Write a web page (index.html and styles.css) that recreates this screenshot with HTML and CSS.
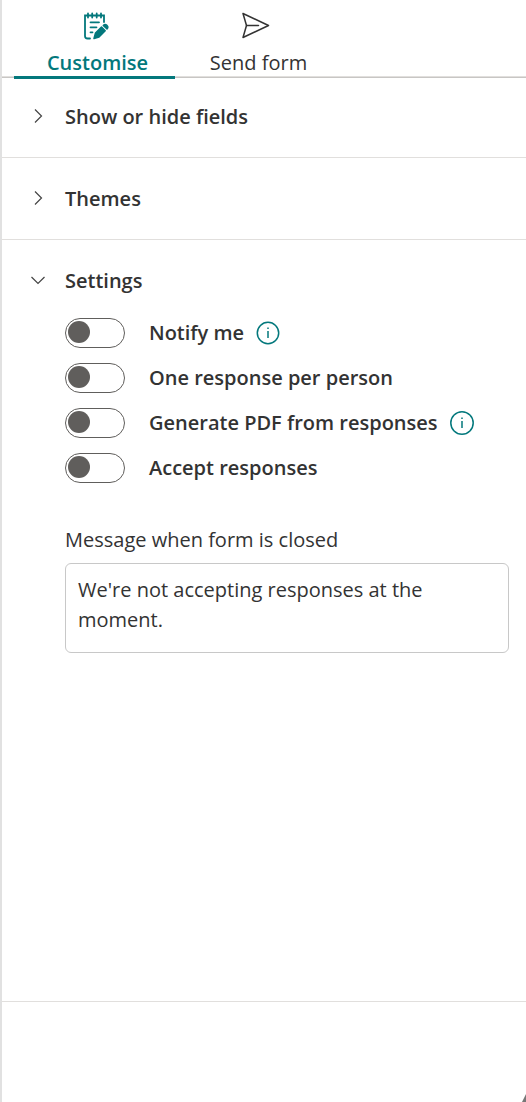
FILE: index.html
```html
<!DOCTYPE html>
<html lang="en-GB">
<head>
    <meta charset="UTF-8">
    <meta name="viewport" content="width=device-width, initial-scale=1.0">
    <title>Form settings</title>
    <link rel="stylesheet" href="styles.css">
</head>
<body>
    <div class="panel">
        <nav class="tabs">
            <button type="button" class="tab active">
                <svg class="tab-icon" viewBox="0 0 30 30" fill="none" stroke="currentColor" stroke-width="1.8" stroke-linecap="round">
                    <path d="M10 27.500H7.500A2.500 2.500 0 0 1 5 25V4.500H24V11"/>
                    <path d="M8 2.500V6.500M12.200 2.500V6.500M16.700 2.500V6.500M21 2.500V6.500"/>
                    <path d="M10.500 11.300H19M10.500 16.300H16.500M10.500 21.300H12.500"/>
                    <path d="M14 27.500L15.500 22L21.500 16L25.200 19.700L19 26Z" fill="currentColor" stroke-width="1.5" stroke-linejoin="round"/>
                    <path d="M23.300 14.500A2.500 2.500 0 0 1 27 18Z" fill="currentColor" stroke-width="1.5" stroke-linejoin="round"/>
                </svg>
                <span>Customise</span>
            </button>
            <button type="button" class="tab">
                <svg class="tab-icon" viewBox="0 0 30 30" fill="none" stroke="currentColor" stroke-width="1.500" stroke-linejoin="round">
                    <path d="M2 2.500L27.500 14.500L2 26.500L5.500 14.500Z"/>
                    <path d="M5.500 14.500H17.500" stroke-linecap="round"/>
                </svg>
                <span>Send form</span>
            </button>
        </nav>

        <main class="content">
            <section class="section">
                <button type="button" class="section-header" aria-expanded="false">
                    <svg class="chevron" viewBox="0 0 16 16"><path d="M5 .5L11.500 7L5 13.500"/></svg>
                    <span>Show or hide fields</span>
                </button>
            </section>

            <section class="section">
                <button type="button" class="section-header" aria-expanded="false">
                    <svg class="chevron" viewBox="0 0 16 16"><path d="M5 .5L11.500 7L5 13.500"/></svg>
                    <span>Themes</span>
                </button>
            </section>

            <section class="section">
                <button type="button" class="section-header" aria-expanded="true">
                    <svg class="chevron" viewBox="0 0 16 16"><path d="M1.500 4L8 10.500L14.500 4"/></svg>
                    <span>Settings</span>
                </button>

                <div class="settings">
                    <div class="setting">
                        <input type="checkbox" role="switch" class="toggle" id="notify">
                        <label for="notify">Notify me</label>
                        <button type="button" class="info" aria-label="About notifications">
                            <svg viewBox="0 0 24 24"><circle cx="12" cy="12" r="10.700"/><path d="M12 10V17M12 6.500V8"/></svg>
                        </button>
                    </div>
                    <div class="setting">
                        <input type="checkbox" role="switch" class="toggle" id="one-response">
                        <label for="one-response">One response per person</label>
                    </div>
                    <div class="setting">
                        <input type="checkbox" role="switch" class="toggle" id="pdf">
                        <label for="pdf">Generate PDF from responses</label>
                        <button type="button" class="info" aria-label="About PDF responses">
                            <svg viewBox="0 0 24 24"><circle cx="12" cy="12" r="11.200"/><path d="M12 10V17M12 6.500V8"/></svg>
                        </button>
                    </div>
                    <div class="setting">
                        <input type="checkbox" role="switch" class="toggle" id="accept">
                        <label for="accept">Accept responses</label>
                    </div>

                    <label class="message-label" for="message">Message when form is closed</label>
                    <textarea class="message" id="message" rows="2">We're not accepting responses at the moment.</textarea>
                </div>
            </section>
        </main>

        <footer class="footer">
            <svg class="corner" viewBox="0 0 4 8"><path d="M4 0V8H0Z"/></svg>
        </footer>
    </div>
</body>
</html>
```

FILE: styles.css
```css
* {
    box-sizing: border-box;
    margin: 0;
    padding: 0;
}
body {
    background-color: #fff;
    color: #333;
    font-family: "Open Sans", "Noto Sans", sans-serif;
    font-size: 20px;
    line-height: 30px;
}
button {
    background: none;
    border: none;
    color: inherit;
    font: inherit;
    cursor: pointer;
}
.panel {
    display: flex;
    flex-direction: column;
    min-height: 100vh;
    border-left: 2px solid #e1e1e1;
}
.tabs {
    display: flex;
    height: 78px;
    margin-bottom: -2px;
    padding-left: 12px;
    box-shadow: inset 0 -1px #c8c6c4, inset 0 -2px #e1dfdd;
}
.tab {
    display: flex;
    flex-direction: column;
    align-items: center;
    gap: 7px;
    width: 161px;
    height: 79px;
    padding-top: 11px;
    border-bottom: 3px solid transparent;
}
.tab span {
    padding-left: 6px;
}
.tab.active {
    color: #03787c;
    font-weight: 600;
    border-bottom-color: #03787c;
}
.tab-icon {
    flex: none;
    width: 30px;
    height: 30px;
}
.content {
    flex: 1;
}
.section {
    border-bottom: 1px solid #e1dfdd;
}
.section:last-child {
    border-bottom: none;
}
.section-header {
    display: flex;
    align-items: center;
    gap: 19px;
    width: 100%;
    height: 81px;
    padding-left: 28px;
    font-weight: 600;
    text-align: left;
}
.chevron {
    width: 16px;
    height: 16px;
    fill: none;
    stroke: #444;
    stroke-width: 1.2;
}
.settings {
    margin-top: -3px;
    padding: 0 17px 0 63px;
}
.setting {
    display: flex;
    align-items: center;
    height: 30px;
    margin-bottom: 15px;
    font-weight: 600;
}
.toggle {
    appearance: none;
    flex: none;
    width: 60px;
    height: 30px;
    margin-right: 24px;
    padding: 2px;
    border: 1px solid #605e5c;
    border-radius: 15px;
    cursor: pointer;
}
.toggle::before {
    content: "";
    display: block;
    width: 22px;
    height: 22px;
    border-radius: 50%;
    background-color: #605e5c;
}
.toggle:checked::before {
    margin-left: auto;
}
.info {
    display: flex;
    margin-left: 12px;
}
.info svg {
    width: 24px;
    height: 24px;
    fill: none;
    stroke: #03787c;
    stroke-width: 1.5;
}
.message-label {
    display: block;
    margin-top: 42px;
    margin-bottom: 8px;
}
.message {
    display: block;
    width: 100%;
    height: 90px;
    padding: 11px 12px;
    border: 1px solid #c8c8c8;
    border-radius: 6px;
    color: inherit;
    font: inherit;
    resize: none;
}
.footer {
    display: flex;
    justify-content: flex-end;
    align-items: flex-end;
    height: 101px;
    border-top: 1px solid #e1dfdd;
}
.corner {
    width: 4px;
    height: 8px;
    fill: #777;
}
```
